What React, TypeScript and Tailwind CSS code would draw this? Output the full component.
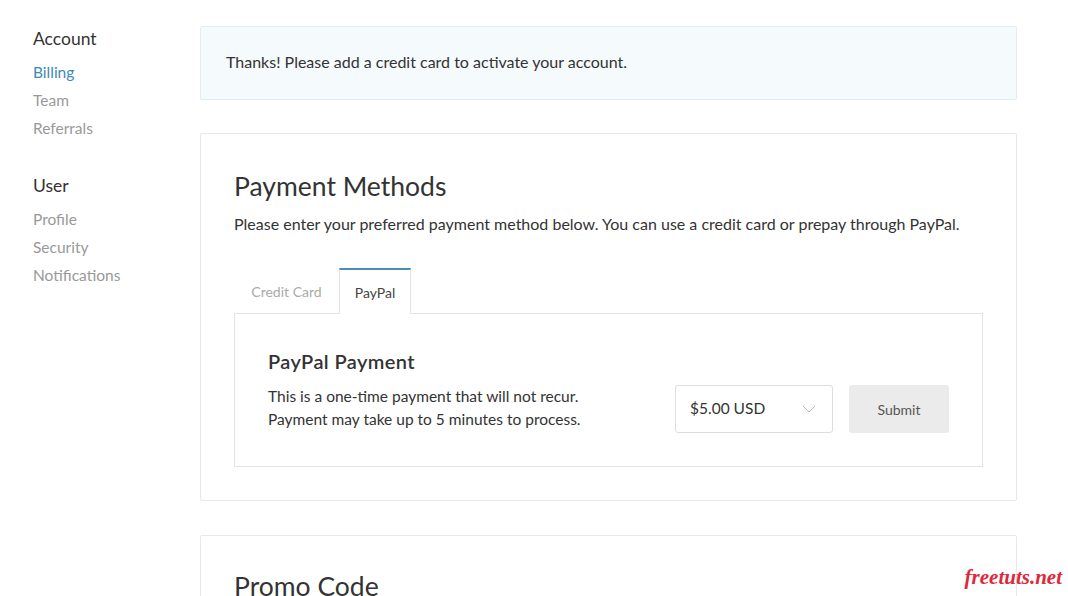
import React from "react";

export default function App() {
  const font = { fontFamily: "Lato, 'Open Sans', sans-serif" };
  return (
    <div className="h-[596px] w-[1068px] bg-white text-[#333] overflow-hidden relative" style={font}>
      <div className="flex pl-[33px] pt-[26px]">
        <aside className="w-[167px] shrink-0">
          <div className="text-[17.5px] leading-[24px] text-[#333] mt-[1px]">Account</div>
          <ul className="mt-[7px] text-[15.5px] leading-[28px]">
            <li className="text-[#3d8ab8]">Billing</li>
            <li className="text-[#999]">Team</li>
            <li className="text-[#999]">Referrals</li>
          </ul>
          <div className="text-[17.5px] leading-[24px] text-[#333] mt-[32px]">User</div>
          <ul className="mt-[7px] text-[15.5px] leading-[28px] text-[#999]">
            <li>Profile</li>
            <li>Security</li>
            <li>Notifications</li>
          </ul>
        </aside>
        <main className="w-[817px] shrink-0 flex flex-col">
          <div className="h-[74px] border border-[#e2edf3] bg-[#f5fafd] rounded-[2px] flex items-center px-[25px] pb-[2px] text-[16px] text-[#333]">
            Thanks! Please add a credit card to activate your account.
          </div>
          <section className="mt-[33px] border border-[#e8e8e8] rounded-[2px] px-[33px] pt-[36px] pb-[33px]">
            <h2 className="text-[26.5px] leading-[32px] text-[#333]">Payment Methods</h2>
            <p className="mt-[12px] text-[16px] leading-[20px] text-[#333]">
              Please enter your preferred payment method below. You can use a credit card or prepay through PayPal.
            </p>
            <div className="mt-[34px] flex items-end">
              <div className="w-[105px] h-[44px] flex items-center justify-center text-[14px] text-[#aaa]">Credit Card</div>
              <div className="w-[72px] h-[46px] border-x border-t-2 border-x-[#e4e4e4] border-t-[#4a8db5] bg-white -mb-px relative z-10 flex items-center justify-center text-[14px] text-[#444]">
                PayPal
              </div>
            </div>
            <div className="border border-[#e4e4e4] h-[154px] px-[33px] pt-[35px] flex items-start justify-between">
              <div>
                <h3 className="text-[20px] leading-[24px] font-semibold tracking-[0.4px] text-[#333]">PayPal Payment</h3>
                <p className="mt-[12px] text-[15.5px] leading-[23px] text-[#333]">
                  This is a one-time payment that will not recur.
                  <br />
                  Payment may take up to 5 minutes to process.
                </p>
              </div>
              <div className="flex items-center gap-[16px] mt-[36px]">
                <div className="w-[158px] h-[48px] border border-[#dddddd] rounded-[3px] flex items-center justify-between pl-[14px] pr-[16px] text-[15.5px] text-[#333]">
                  <span>$5.00 USD</span>
                  <svg width="14" height="8" viewBox="0 0 14 8" fill="none" stroke="#bbb" strokeWidth="1">
                    <path d="M1 1l6 6 6-6" />
                  </svg>
                </div>
                <button className="w-[100px] h-[48px] bg-[#ebebeb] rounded-[3px] text-[14px] text-[#555]">Submit</button>
              </div>
            </div>
          </section>
          <section className="mt-[34px] border border-[#e8e8e8] rounded-[2px] px-[33px] pt-[34px] h-[120px]">
            <h2 className="text-[26.5px] leading-[32px] text-[#333]">Promo Code</h2>
          </section>
        </main>
      </div>
      <div
        className="absolute right-[6px] top-[562px] text-[21px] italic font-bold text-[#e0283a]"
        style={{ fontFamily: "'Liberation Serif', serif" }}
      >
        freetuts.net
      </div>
    </div>
  );
}
